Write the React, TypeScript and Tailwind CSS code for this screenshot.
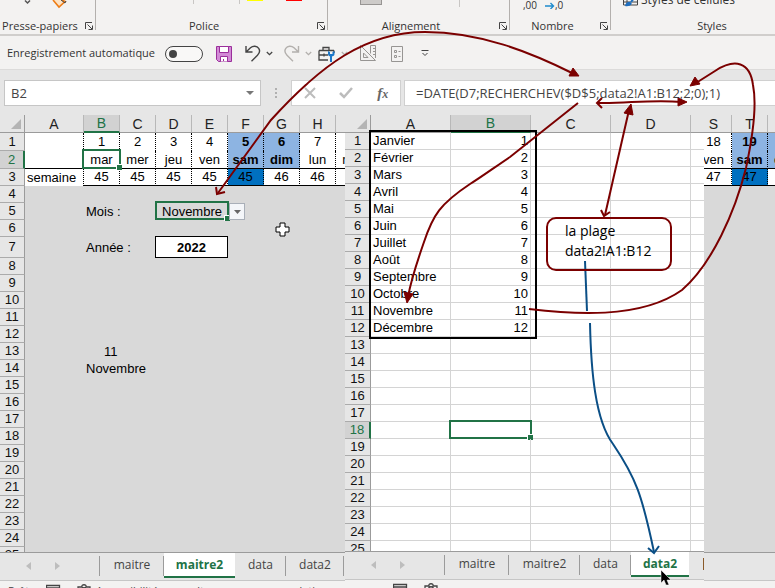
import { useState, type ReactNode } from "react";
import clsx from "clsx";

interface Day {
  col: string;
  num: number;
  name: string;
  week: number;
  saturday?: boolean;
  weekend?: boolean;
}

const firstDays: Day[] = [
  { col: "B", num: 1, name: "mar", week: 45 },
  { col: "C", num: 2, name: "mer", week: 45 },
  { col: "D", num: 3, name: "jeu", week: 45 },
  { col: "E", num: 4, name: "ven", week: 45 },
  { col: "F", num: 5, name: "sam", week: 45, weekend: true, saturday: true },
  { col: "G", num: 6, name: "dim", week: 46, weekend: true },
  { col: "H", num: 7, name: "lun", week: 46 },
  { col: "I", num: 8, name: "mar", week: 46 },
];

const lastDays: Day[] = [
  { col: "S", num: 18, name: "ven", week: 47 },
  { col: "T", num: 19, name: "sam", week: 47, weekend: true, saturday: true },
  { col: "U", num: 20, name: "dim", week: 47, weekend: true },
];

const months = [
  "Janvier", "Février", "Mars", "Avril", "Mai", "Juin",
  "Juillet", "Août", "Septembre", "Octobre", "Novembre", "Décembre",
];

const range = (from: number, to: number) =>
  Array.from({ length: to - from + 1 }, (_, i) => from + i);

/* ---------- Ribbon ---------- */

function Launcher() {
  return (
    <button aria-label="Options" className="w-[10px] h-[10px]">
      <svg width="10" height="10" viewBox="0 0 10 10" fill="none" stroke="#444" strokeWidth="1">
        <path d="M1.500 8V1.500H8" />
        <path d="M3.500 3.500L8 8M8.500 4.500V8.500H4.500" />
      </svg>
    </button>
  );
}

function Group({ label, className, launcher = true, children }: {
  label: string;
  className: string;
  launcher?: boolean;
  children?: ReactNode;
}) {
  return (
    <section className={clsx("relative shrink-0 flex flex-col justify-end h-[34px]", className)}>
      {children}
      <div className="flex items-center pr-[2px]">
        <span className="flex-1 pr-1 text-center leading-4 whitespace-nowrap">{label}</span>
        {launcher && <Launcher />}
      </div>
      {launcher && <i className="absolute right-0 top-0 h-[30px] w-px bg-[#b3b0ad]" />}
    </section>
  );
}

function Ribbon() {
  return (
    <header className="flex h-9 shrink-0 overflow-hidden border-b-2 border-[#d0cecc] bg-[#f3f2f1] text-[11px] text-[#333]">
      <Group label="Presse-papiers" className="w-24">
        <svg className="absolute left-0 top-0" width="95" height="10" fill="none">
          <path d="M25 0.5L27.5 3L30 0.5" stroke="#555" strokeWidth="1.5" />
          <path d="M53 0L59 7L65 1.5L62 0" stroke="#ee7d16" strokeWidth="1.6" fill="#fde3c5" />
          <path d="M61 0L65 3L66 1" stroke="#444" />
        </svg>
      </Group>
      <Group label="Police" className="w-[232px]">
        <svg className="absolute left-0 top-0" width="231" height="6">
          <path d="M97.5 0V4M143.5 0V4" stroke="#c8c6c4" />
          <rect x="151" width="16" height="1" fill="#ffff00" />
          <rect x="190" width="16" height="1" fill="#ff0000" />
        </svg>
      </Group>
      <Group label="Alignement" className="w-[182px]">
        <svg className="absolute left-0 top-0" width="181" height="8">
          <rect x="32.5" y="-3" width="21" height="7.5" fill="#cdcbc9" stroke="#979593" />
          <path d="M131.5 0V7" stroke="#c8c6c4" />
        </svg>
      </Group>
      <Group label="Nombre" className="w-[101px]">
        <div className="absolute left-[13px] top-0 flex gap-2 text-[10px] leading-[10px]">
          <span>,00</span>
          <span className="flex items-center">
            <svg width="10" height="8" viewBox="0 0 10 8" fill="none" stroke="#1e8bcd" strokeWidth="1.4">
              <path d="M0 5H8.500M5.500 2L8.500 5L5.500 8" />
            </svg>
            ,0
          </span>
        </div>
      </Group>
      <Group label="Styles" className="w-[208px]" launcher={false}>
        <div className="absolute left-[11px] top-[-8px] flex items-center gap-[3px] text-[12px] leading-4 whitespace-nowrap">
          <svg width="16" height="14" viewBox="0 0 16 14" fill="none">
            <path d="M1.500 1.500H15.500V12H1.500ZM1.500 9H15M5 2V12" stroke="#444" />
            <path d="M3 13C4 9 7 8 9 9.500C11 11 8 14 3 13Z" fill="#1e6fc0" />
            <path d="M9 9L14.500 2" stroke="#1e6fc0" strokeWidth="2" />
          </svg>
          <span>Styles de cellules</span>
        </div>
      </Group>
    </header>
  );
}

function Chevron({ color = "#444" }: { color?: string }) {
  return (
    <svg width="7" height="5" viewBox="0 0 7 5" fill="none" stroke={color} strokeWidth="1.300">
      <path d="M0.800 1L3.500 3.700L6.200 1" />
    </svg>
  );
}

function QuickAccess() {
  return (
    <div className="flex h-[34px] shrink-0 items-center border-b border-[#dcdbda] bg-[#f3f2f1] pl-[7px] pt-[2px] text-[11px] text-[#333]">
      <label htmlFor="autosave" className="w-[158px] whitespace-nowrap">Enregistrement automatique</label>
      <span className="relative flex h-4 w-[38px]">
        <input
          id="autosave"
          type="checkbox"
          role="switch"
          className="peer h-4 w-[38px] appearance-none rounded-full border border-[#444] bg-[#f9f8f7]"
        />
        <i className="pointer-events-none absolute left-1 top-1 h-2 w-2 rounded-full bg-[#444] peer-checked:left-[26px]" />
      </span>
      <button aria-label="Enregistrer" className="ml-[13px]">
        <svg width="16" height="16" viewBox="0 0 16 16" fill="none" stroke="#9b2f9b">
          <path d="M0.500 0.500H15.500V15.500H2.500L0.500 13.500Z" fill="#d28ad6" />
          <path d="M3.500 0.500H12.500V6.500H3.500Z" fill="#fff" />
          <path d="M4.500 15.500V10.500H11.500V15.500M7.500 15V13" fill="#fff" />
        </svg>
      </button>
      <button aria-label="Annuler" className="ml-[13px] flex items-center gap-[5px]">
        <svg width="16" height="17" viewBox="0 0 16 17" fill="none" stroke="#444" strokeWidth="1.400">
          <path d="M1 1V7H7.500M1.300 6.700L5.500 2.800C8 0.500 12 0.800 13.700 3.300C15.300 5.800 14.500 8.300 12.500 10.300L6.500 16.300" />
        </svg>
        <Chevron />
      </button>
      <button aria-label="Rétablir" className="ml-[11px] flex items-center gap-[5px]">
        <svg width="16" height="17" viewBox="0 0 16 17" fill="none" stroke="#b3b0ad" strokeWidth="1.400">
          <path d="M14.500 1V7H8M14.200 6.700L10 2.800C7.500 0.500 3.500 0.800 1.800 3.300C0.200 5.800 1 8.300 3 10.300L9 16.300" />
        </svg>
        <Chevron color="#b3b0ad" />
      </button>
      <button aria-label="Outils" className="ml-[6px] flex items-center gap-[5px]">
        <svg width="18" height="16" viewBox="0 0 18 16" fill="none">
          <path d="M1 4.500H16M1 4.500V14H10M1.500 9H10M6 7.500V10.500M5 4V1.500H11V4M16 4.500V7" stroke="#444" strokeWidth="1.300" />
          <path d="M10 5V8C10 9.500 11 10 12 10.500V16H14V10.500C15.500 10 16.500 9.500 16.500 8V5L14.500 6V8H12V6Z" fill="#1b77c9" />
        </svg>
        <Chevron color="#b3b0ad" />
      </button>
      <button aria-label="Mode création" className="ml-3">
        <svg width="17" height="17" viewBox="0 0 17 17" fill="none" stroke="#979593">
          <path d="M0.500 0.500V15.500H15.500ZM3.500 8V12.500H8Z" />
          <path d="M10.500 8.500V0.500H15.500V13M13 3.500H15.500M13 6.500H15.500M13 9.500H15.500" />
        </svg>
      </button>
      <button aria-label="Propriétés" className="ml-[14px]">
        <svg width="13" height="16" viewBox="0 0 13 16" fill="none" stroke="#979593">
          <path d="M0.500 0.500H11.500V15.500H0.500ZM3.500 4.500H5.500V6.500H3.500ZM3.500 9.500H5.500V11.500H3.500ZM7.500 5.500H9.500M7.500 10.500H9.500" />
        </svg>
      </button>
      <button aria-label="Personnaliser" className="ml-[17px]">
        <svg width="8" height="7" viewBox="0 0 8 7" fill="none" stroke="#444">
          <path d="M0.500 0.500H7.500M1.500 3L4 5.500L6.500 3" />
        </svg>
      </button>
    </div>
  );
}

function FormulaBar() {
  return (
    <div className="flex h-[45px] shrink-0 items-start bg-[#e6e6e6] pt-[10px] pl-1 text-[13px] text-[#444]">
      <div className="flex h-[26px] w-[257px] shrink-0 items-center border border-[#c6c6c6] bg-white pr-[6px]">
        <input aria-label="Zone Nom" defaultValue="B2" className="h-6 min-w-0 flex-1 bg-transparent pl-[6px] outline-none" />
        <svg width="8" height="4"><path d="M0 0H8L4 4Z" fill="#777" /></svg>
      </div>
      <svg className="mx-[14px] shrink-0" width="2" height="26" fill="#b0b0b0">
        <path d="M0 8H2V10H0ZM0 12H2V14H0ZM0 16H2V18H0Z" />
      </svg>
      <div className="flex h-[26px] w-[110px] shrink-0 items-center justify-around border border-[#d0d0d0] bg-white">
        <button aria-label="Annuler la saisie">
          <svg width="12" height="12" viewBox="0 0 12 12" stroke="#bcbcbc" strokeWidth="2"><path d="M1 1L11 11M11 1L1 11" /></svg>
        </button>
        <button aria-label="Valider">
          <svg width="14" height="12" viewBox="0 0 14 12" fill="none" stroke="#bcbcbc" strokeWidth="2.500"><path d="M1 6L5 10L13 1" /></svg>
        </button>
        <button aria-label="Insérer une fonction" className="font-['Liberation_Serif',serif] text-[15px] font-bold italic leading-4 text-[#666]">
          f<span className="text-[12px]">x</span>
        </button>
      </div>
      <input
        aria-label="Barre de formule"
        defaultValue="=DATE(D7;RECHERCHEV($D$5;data2!A1:B12;2;0);1)"
        className="ml-[3px] h-[26px] min-w-0 flex-1 border border-r-0 border-[#d0d0d0] bg-white pl-[11px] outline-none"
      />
    </div>
  );
}

/* ---------- Sheets ---------- */

function ColHead({ letter, selected, className }: { letter?: string; selected?: boolean; className?: string }) {
  return (
    <th
      className={clsx(
        "border-r border-r-[#b8b8b8] p-0 text-[14px] font-normal leading-4",
        selected
          ? "border-b-2 border-b-[#217346] bg-[#d2d2d2] text-[#217346]"
          : "border-b border-b-[#9b9b9b] bg-[#e6e6e6] text-[#222]",
        className,
      )}
    >
      {letter}
    </th>
  );
}

function Corner() {
  return (
    <th className="border-b border-r border-[#9b9b9b] bg-[#e6e6e6] p-0">
      <svg className="ml-auto mr-[3px]" width="10" height="10"><path d="M10 0V10H0Z" fill="#b4b4b4" /></svg>
    </th>
  );
}

function RowHead({ n, selected, className }: { n: number; selected?: boolean; className: string }) {
  return (
    <th
      className={clsx(
        "border-b border-b-[#ababab] p-0 font-normal",
        selected
          ? "border-r-2 border-r-[#217346] bg-[#d2d2d2] text-[#217346]"
          : "border-r border-r-[#9b9b9b] bg-[#e6e6e6] text-[#111]",
        className,
      )}
    >
      {n}
    </th>
  );
}

function dayCell(day: Day) {
  return clsx(
    "border-r border-r-black p-0 [border-right-style:dotted]",
    day.weekend ? "bg-[#8db4e2] font-bold" : "bg-white",
  );
}

function weekCell(day: Day) {
  return clsx(
    "border-b border-r border-black p-0 [border-right-style:dotted]",
    day.saturday ? "bg-[#0070c0]" : "bg-white",
  );
}

function CalendarSheet() {
  const [month, setMonth] = useState("Novembre");
  return (
    <table className="w-[372px] table-fixed border-separate border-spacing-0 text-center text-[13px] leading-4 text-black">
      <colgroup>
        <col className="w-[25px]" />
        <col className="w-[59px]" />
        {firstDays.map((d) => <col key={d.col} className="w-9" />)}
      </colgroup>
      <thead>
        <tr className="h-[18px]">
          <Corner />
          <ColHead letter="A" />
          {firstDays.map((d) => <ColHead key={d.col} letter={d.col} selected={d.col === "B"} />)}
        </tr>
      </thead>
      <tbody>
        <tr>
          <RowHead n={1} className="h-[18px]" />
          <td className="border-r border-r-black bg-white p-0 [border-right-style:dotted]" />
          {firstDays.map((d) => <td key={d.col} className={dayCell(d)}>{d.num}</td>)}
        </tr>
        <tr>
          <RowHead n={2} selected className="h-[18px]" />
          <td className="border-b border-r border-black bg-white p-0 [border-right-style:dotted]" />
          {firstDays.map((d) => (
            <td key={d.col} className={clsx(dayCell(d), "relative border-b border-b-black")}>
              {d.name}
              {d.col === "B" && (
                <span className="absolute -inset-x-[2px] -top-[2px] -bottom-px z-10 border-2 border-[#217346]">
                  <i className="absolute -bottom-[3px] -right-[3px] h-[6px] w-[6px] border-l border-t border-white bg-[#217346]" />
                </span>
              )}
            </td>
          ))}
        </tr>
        <tr>
          <RowHead n={3} className="h-[17px]" />
          <td className="border-r border-black bg-white p-0 pl-[2px] text-left [border-right-style:dotted]">semaine</td>
          {firstDays.map((d) => <td key={d.col} className={weekCell(d)}>{d.week}</td>)}
        </tr>
        <tr>
          <RowHead n={4} className="h-[17px]" />
          <td colSpan={9} className="p-0" />
        </tr>
        <tr>
          <RowHead n={5} className="h-[17px]" />
          <td className="p-0" />
          <td colSpan={2} className="p-0 pl-[2px] text-left"><label htmlFor="month">Mois :</label></td>
          <td colSpan={2} className="relative p-0">
            <select
              id="month"
              value={month}
              onChange={(e) => setMonth(e.target.value)}
              className="block h-4 w-full appearance-none bg-transparent text-center text-[13px] leading-4 outline-none"
            >
              {months.map((m) => <option key={m}>{m}</option>)}
            </select>
            <span className="pointer-events-none absolute -left-px -right-px -top-[2px] bottom-0 border-2 border-[#217346]">
              <i className="absolute -bottom-[3px] -right-[3px] h-[6px] w-[6px] border-l border-t border-white bg-[#217346]" />
            </span>
            <span className="pointer-events-none absolute left-[73px] top-0 flex h-[17px] w-4 items-center justify-center border border-[#a9afb8] bg-[#f4f6f9]">
              <svg width="7" height="4"><path d="M0 0H7L3.500 4Z" fill="#666" /></svg>
            </span>
          </td>
          <td colSpan={4} className="p-0" />
        </tr>
        <tr>
          <RowHead n={6} className="h-[17px]" />
          <td colSpan={9} className="p-0" />
        </tr>
        <tr>
          <RowHead n={7} className="h-[21px]" />
          <td className="p-0" />
          <td colSpan={2} className="p-0 pl-[2px] text-left"><label htmlFor="year">Année :</label></td>
          <td colSpan={2} className="relative p-0">
            <input
              id="year"
              defaultValue="2022"
              className="absolute -left-px -top-px h-[22px] w-[73px] border border-black bg-white p-0 text-center text-[13px] font-bold outline-none"
            />
          </td>
          <td colSpan={4} className="p-0" />
        </tr>
        {range(8, 25).map((n) => (
          <tr key={n}>
            <RowHead n={n} className="h-[17px]" />
            <td className="p-0" />
            <td colSpan={2} className="p-0 pl-[2px] text-left">
              {n === 13 && <span className="pl-[18px]">11</span>}
              {n === 14 && month}
            </td>
            <td colSpan={6} className="p-0" />
          </tr>
        ))}
      </tbody>
    </table>
  );
}

function MonthSheet() {
  const gridCell = "border-b border-r border-[#d4d4d4] p-0";
  return (
    <div className="relative">
      <table className="w-[426px] table-fixed border-separate border-spacing-0 bg-white text-[13px] leading-4 text-black">
        <colgroup>
          <col className="w-[26px]" />
          {range(1, 5).map((n) => <col key={n} className="w-20" />)}
        </colgroup>
        <thead>
          <tr className="h-[17px]">
            <Corner />
            {["A", "B", "C", "D", ""].map((l) => <ColHead key={l} letter={l} selected={l === "B"} />)}
          </tr>
        </thead>
        <tbody>
          {range(1, 25).map((n) => (
            <tr key={n}>
              <RowHead n={n} selected={n === 18} className="h-[17px]" />
              <td className={clsx(gridCell, "pl-[2px]")}>{months[n - 1]}</td>
              <td className={clsx(gridCell, "relative pr-[2px] text-right")}>
                {n <= 12 && n}
                {n === 18 && (
                  <span className="absolute -left-[2px] -right-[2px] -top-[2px] -bottom-px border-2 border-[#217346]">
                    <i className="absolute -bottom-[3px] -right-[3px] h-[6px] w-[6px] border-l border-t border-white bg-[#217346]" />
                  </span>
                )}
              </td>
              <td className={gridCell} />
              <td className={gridCell} />
              <td className={gridCell} />
            </tr>
          ))}
        </tbody>
      </table>
      {/* Thick outline round the lookup range */}
      <div className="pointer-events-none absolute left-[24px] top-[15px] h-[209px] w-[168px] border-2 border-black" />
    </div>
  );
}

function CalendarEnd() {
  return (
    <table className="-ml-2 w-[108px] table-fixed border-separate border-spacing-0 text-center text-[13px] leading-4 text-black">
      <thead>
        <tr className="h-[18px]">
          {lastDays.map((d) => <ColHead key={d.col} letter={d.col} />)}
        </tr>
      </thead>
      <tbody>
        <tr>{lastDays.map((d) => <td key={d.col} className={clsx(dayCell(d), "h-[18px]")}>{d.num}</td>)}</tr>
        <tr>{lastDays.map((d) => <td key={d.col} className={clsx(dayCell(d), "h-[18px] border-b border-b-black")}>{d.name}</td>)}</tr>
        <tr>{lastDays.map((d) => <td key={d.col} className={clsx(weekCell(d), "h-[17px]")}>{d.week}</td>)}</tr>
      </tbody>
    </table>
  );
}

/* ---------- Sheet tabs and status bar ---------- */

function SheetTabs({ active, className }: { active: string; className: string }) {
  const tabs = [
    { name: "maitre", width: "w-16" },
    { name: "maitre2", width: "w-[71px]" },
    { name: "data", width: "w-[51px]" },
    { name: "data2", width: "w-[58px]" },
  ];
  return (
    <nav className={clsx("flex shrink-0 overflow-hidden border-t border-[#9b9b9b] bg-[#e6e6e6] text-[12px] text-[#444]", className)}>
      <div className="flex h-[25px] w-[99px] shrink-0 items-center gap-6 pl-[26px]">
        <button aria-label="Précédent"><svg width="5" height="8"><path d="M5 0V8L0 4Z" fill="#bdbdbd" /></svg></button>
        <button aria-label="Suivant"><svg width="5" height="8"><path d="M0 0V8L5 4Z" fill="#bdbdbd" /></svg></button>
      </div>
      <i className="mt-[3px] h-5 w-px shrink-0 bg-[#9b9b9b]" />
      {tabs.map((t) => (
        <button
          key={t.name}
          className={clsx(
            "relative h-6 shrink-0 leading-5",
            t.width,
            t.name === active && "-mt-px h-[26px] border-b-2 border-[#217346] bg-white pt-px font-bold text-[#217346]",
          )}
        >
          {t.name}
          {t.name !== active && <i className="absolute right-0 top-[3px] h-5 w-px bg-[#9b9b9b]" />}
        </button>
      ))}
      <i className="ml-[14px] mt-[6px] h-3 w-px shrink-0 bg-[#8a5a2a]" />
    </nav>
  );
}

function StatusBar({ className, children }: { className: string; children?: ReactNode }) {
  return (
    <footer className={clsx("flex shrink-0 overflow-hidden border-t border-[#c6c6c6] bg-[#f3f2f1] text-[11px] leading-5 text-[#444]", className)}>
      {children}
    </footer>
  );
}

function StatusIcons() {
  return (
    <svg className="shrink-0" width="46" height="8" viewBox="0 0 46 8" fill="none" stroke="#444" strokeWidth="1.300">
      <path d="M0.500 8V4.500H13.500V8M1 7H13" />
      <path d="M32 8V6H36C35 3 41 3 40 6H44V8M35.500 8C37 6.500 39 6.500 40.500 8" />
    </svg>
  );
}

/* ---------- Annotations ---------- */

function Annotations() {
  return (
    <div className="pointer-events-none absolute left-0 top-0 z-20">
      <svg width="775" height="588" viewBox="0 0 775 588" fill="none" stroke="#7b0000" strokeWidth="2">
        <path d="M218 193L271 120C320 66 365 32 425 32C480 32 530 52 572 73" />
        <path d="M216 187L217 194L225 192" />
        <path d="M579 76L569 76L573 68Z" fill="#7b0000" strokeWidth="1" />

        <path d="M578 103L510 157C495 167 480 178 470 184C440 204 433 215 424 242C417 262 411 280 408 297" />
        <path d="M407 303L404 292L413 294Z" fill="#7b0000" strokeWidth="1" />

        <path d="M597 103C625 104 650 99 682 102" />
        <path d="M602 98L597 103L602 108" />
        <path d="M687 102L678 98V106Z" fill="#7b0000" strokeWidth="1" />

        <path d="M629 110L605 215" />
        <path d="M631 104L624 113L633 115Z" fill="#7b0000" strokeWidth="1" />
        <path d="M601 210L604 216L610 212" />

        <path d="M529 309C570 314 640 320 682 290C712 264 735 212 746 168C752 140 757 105 753 85C750 62 735 58 715 71L696 83" />
        <path d="M690 86L695 77L700 84Z" fill="#7b0000" strokeWidth="1" />

        <g stroke="#0b4f86">
          <path d="M585 261L587 311" />
          <path d="M590 323C591 370 595 420 613 444C636 478 642 495 654 552" />
          <path d="M648 548L654 553L659 546" />
        </g>

        <path d="M280 223H285V227H289V232H285V236H280V232H276V227H280Z" fill="#fff" stroke="#000" strokeWidth="1" />
        <path d="M661 570V583L664 580L666 585H669L667 580H671Z" fill="#000" stroke="#fff" strokeWidth="0.500" />
      </svg>
      <p className="absolute left-[546px] top-[217px] h-[54px] w-[126px] rounded-[10px] border-2 border-[#7b0000] pl-[17px] pt-[2px] text-[14px] leading-5 text-black">
        la plage
        <br />
        data2!A1:B12
      </p>
    </div>
  );
}

export default function App() {
  return (
    <div className="relative flex h-screen flex-col overflow-hidden bg-[#e6e6e6] font-['Open_Sans','Noto_Sans',sans-serif]">
      <Ribbon />
      <QuickAccess />
      <FormulaBar />
      <main className="flex min-h-0 flex-1">
        <div className="flex w-[345px] shrink-0 flex-col overflow-hidden">
          <div className="min-h-0 flex-1 overflow-hidden bg-[#d9d9d9] font-['Liberation_Sans',sans-serif]">
            <CalendarSheet />
          </div>
          <SheetTabs active="maitre2" className="h-7" />
          <StatusBar className="h-2">
            <span className="w-[46px] shrink-0 pl-2">Prêt</span>
            <StatusIcons />
            <span className="pl-1 whitespace-nowrap">Accessibilité : consultez nos recommandations</span>
          </StatusBar>
        </div>
        <div className="flex w-[359px] shrink-0 flex-col overflow-hidden">
          <div className="min-h-0 flex-1 overflow-hidden bg-white font-['Liberation_Sans',sans-serif]">
            <MonthSheet />
          </div>
          <SheetTabs active="data2" className="h-7" />
          <StatusBar className="h-[9px]">
            <span className="w-12 shrink-0" />
            <StatusIcons />
          </StatusBar>
        </div>
        <div className="flex min-w-0 flex-1 flex-col overflow-hidden">
          <div className="min-h-0 flex-1 overflow-hidden bg-[#d9d9d9] font-['Liberation_Sans',sans-serif]">
            <CalendarEnd />
          </div>
          <div className="h-7 shrink-0 border-t border-[#9b9b9b] bg-[#e6e6e6]" />
          <StatusBar className="h-2" />
        </div>
      </main>
      <Annotations />
    </div>
  );
}
